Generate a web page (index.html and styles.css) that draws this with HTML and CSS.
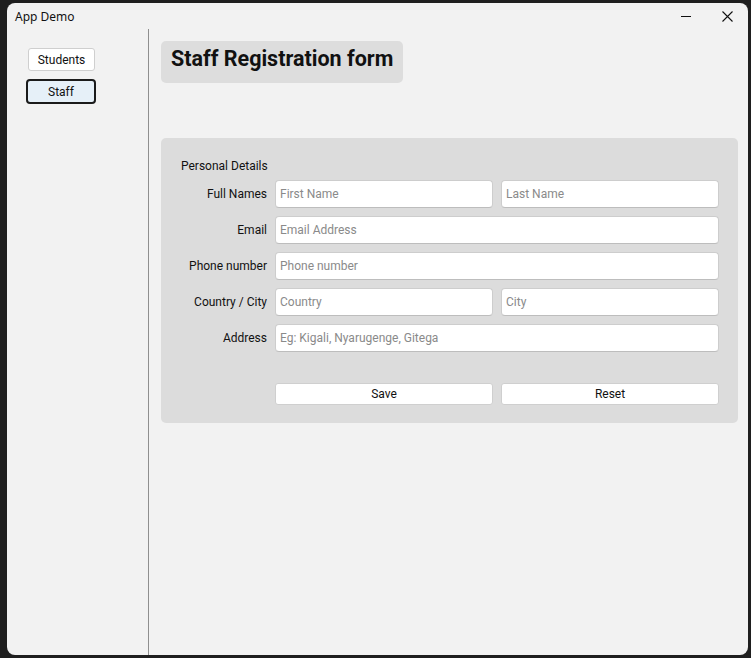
FILE: index.html
```html
<!DOCTYPE html>
<html>
<head>
<meta charset="utf-8">
<link rel="stylesheet" href="styles.css">
</head>
<body>
<div class="window">
  <div class="titlebar">
    <span class="app-title">App Demo</span>
    <div class="controls">
      <span class="ctl"><svg width="10" height="10" viewBox="0 0 10 10"><path d="M0 5.5H10" stroke="#111" stroke-width="1"/></svg></span>
      <span class="ctl"><svg width="11" height="11" viewBox="0 0 11 11"><path d="M0.5 0.5L10.5 10.5M10.5 0.5L0.5 10.5" stroke="#111" stroke-width="1.1"/></svg></span>
    </div>
  </div>
  <div class="app">
    <nav class="sidebar">
      <button class="nav-btn">Students</button>
      <button class="nav-btn active">Staff</button>
    </nav>
    <main class="main">
      <div class="header"><h1>Staff Registration form</h1></div>
      <section class="panel">
        <div class="section-title">Personal Details</div>
        <div class="form">
          <label class="lbl">Full Names</label>
          <input class="inp" placeholder="First Name">
          <input class="inp" placeholder="Last Name">
          <label class="lbl">Email</label>
          <input class="inp wide" placeholder="Email Address">
          <label class="lbl">Phone number</label>
          <input class="inp wide" placeholder="Phone number">
          <label class="lbl">Country / City</label>
          <input class="inp" placeholder="Country">
          <input class="inp" placeholder="City">
          <label class="lbl">Address</label>
          <input class="inp wide" placeholder="Eg: Kigali, Nyarugenge, Gitega">
        </div>
        <div class="actions">
          <button class="act">Save</button>
          <button class="act">Reset</button>
        </div>
      </section>
    </main>
  </div>
</div>
</body>
</html>
```

FILE: styles.css
```css
* { box-sizing: border-box; }
html, body { margin: 0; }
body {
  background: #1f1f1f;
  padding: 3px 3px 3px 7px;
  width: 751px;
  height: 658px;
  font-family: Roboto, "Noto Sans", sans-serif;
}
.window {
  width: 741px;
  height: 652px;
  background: #f2f2f2;
  border-radius: 8px;
  display: flex;
  flex-direction: column;
  overflow: hidden;
}
.titlebar {
  height: 26px;
  display: flex;
  align-items: center;
  padding-left: 8px;
  flex: none;
}
.app-title {
  font-family: "Noto Sans", sans-serif;
  font-size: 12px;
  color: #111;
  margin-top: 1px;
}
.controls {
  margin-left: auto;
  display: flex;
  align-items: center;
  margin-right: 15px;
}
.ctl { display: flex; }
.ctl:first-child { margin-right: 31px; }
.ctl:last-child { margin-top: 1px; }
.app {
  flex: 1;
  display: flex;
}
.sidebar {
  width: 142px;
  border-right: 1px solid #8f8f8f;
  padding: 19px 0 0 21px;
  display: flex;
  flex-direction: column;
  align-items: flex-start;
  gap: 9px;
  flex: none;
}
.nav-btn {
  width: 67px;
  height: 23px;
  background: #fff;
  border: 1px solid #cfcfcf;
  border-radius: 3px;
  font-family: Roboto, sans-serif;
  font-size: 12px;
  color: #111;
  padding: 0;
}
.nav-btn.active {
  background: #e6f0f8;
  border: 2px solid #1b1b1b;
  border-radius: 4px;
  width: 70px;
  height: 25px;
  margin-left: -2px;
  margin-top: -1px;
}
.main {
  flex: 1;
  padding: 12px 0 0 12px;
}
.header {
  display: inline-block;
  background: #dddddd;
  border-radius: 5px;
  height: 42px;
  padding: 0 10px;
}
.header h1 {
  margin: 0;
  font-size: 21.5px;
  font-weight: 700;
  line-height: 36px;
  color: #111;
}
.panel {
  margin-top: 55px;
  width: 577px;
  background: #dcdcdc;
  border-radius: 5px;
  padding: 20px 19px 18px 20px;
}
.section-title {
  font-size: 12px;
  line-height: 16px;
  color: #111;
  margin-bottom: 6px;
}
.form {
  display: grid;
  grid-template-columns: 86px 218px 218px;
  grid-auto-rows: 28px;
  column-gap: 8px;
  row-gap: 8px;
}
.lbl {
  font-size: 12px;
  color: #111;
  text-align: right;
  align-self: center;
  white-space: nowrap;
}
.inp {
  height: 28px;
  background: #fff;
  border: 1px solid #cdcdcd;
  border-bottom-color: #bdbdbd;
  border-radius: 4px;
  padding: 0 4px;
  font-family: Roboto, sans-serif;
  font-size: 12px;
  color: #111;
  outline: none;
}
.inp::placeholder { color: #8a8a8a; }
.wide { grid-column: 2 / 4; }
.actions {
  display: grid;
  grid-template-columns: 218px 218px;
  column-gap: 8px;
  margin: 31px 0 0 94px;
}
.act {
  height: 22px;
  background: #fff;
  border: 1px solid #cfcfcf;
  border-radius: 3px;
  font-family: Roboto, sans-serif;
  font-size: 12px;
  color: #111;
  padding: 0;
}
```
